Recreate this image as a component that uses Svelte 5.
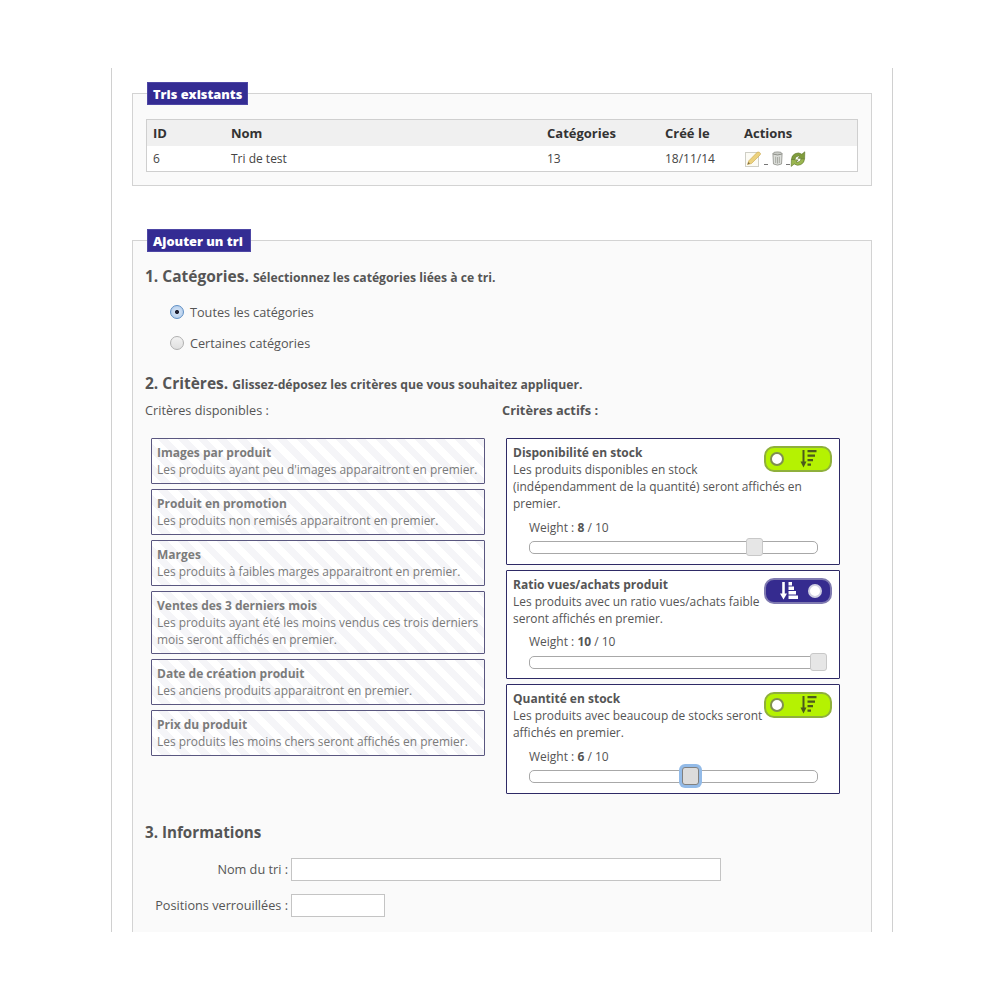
<script>
  const existing = [{ id: 6, name: "Tri de test", cats: 13, date: "18/11/14" }];

  const available = [
    { title: "Images par produit", text: "Les produits ayant peu d'images apparaitront en premier." },
    { title: "Produit en promotion", text: "Les produits non remisés apparaitront en premier." },
    { title: "Marges", text: "Les produits à faibles marges apparaitront en premier." },
    { title: "Ventes des 3 derniers mois", text: "Les produits ayant été les moins vendus ces trois derniers mois seront affichés en premier." },
    { title: "Date de création produit", text: "Les anciens produits apparaitront en premier." },
    { title: "Prix du produit", text: "Les produits les moins chers seront affichés en premier." },
  ];

  const active = [
    { title: "Disponibilité en stock", text: "Les produits disponibles en stock (indépendamment de la quantité) seront affichés en premier.", weight: 8, asc: false },
    { title: "Ratio vues/achats produit", text: "Les produits avec un ratio vues/achats faible seront affichés en premier.", weight: 10, asc: true },
    { title: "Quantité en stock", text: "Les produits avec beaucoup de stocks seront affichés en premier.", weight: 6, asc: false, focus: true },
  ];
</script>

<div class="page">
  <fieldset class="existing">
    <legend>Tris existants</legend>
    <table>
      <thead>
        <tr>
          <th class="c-id">ID</th>
          <th class="c-name">Nom</th>
          <th class="c-cats">Catégories</th>
          <th class="c-date">Créé le</th>
          <th>Actions</th>
        </tr>
      </thead>
      <tbody>
        {#each existing as row}
          <tr>
            <td>{row.id}</td>
            <td>{row.name}</td>
            <td>{row.cats}</td>
            <td>{row.date}</td>
            <td>
              <div class="actions">
                <svg width="17" height="16" viewBox="0 0 17 16">
                  <rect x="0.5" y="1.5" width="13" height="14" fill="#fcfbf4" stroke="#cfcfc6" />
                  <path d="M2.500 13.500 L3.800 9.800 L12.500 1 Q14.500 0.500 15.500 2.500 Q15.500 3.500 15 4 L6.500 12.500 Z" fill="#ecd27e" stroke="#c9a548" stroke-width="0.6" />
                  <path d="M2.500 13.500 L3.400 11 L5 12.500 Z" fill="#7a6a48" />
                </svg>
                <i class="dash"></i>
                <svg class="can" width="11" height="15" viewBox="0 0 12 16">
                  <ellipse cx="6" cy="2.600" rx="5" ry="1.800" fill="#c9cbc6" stroke="#85877f" stroke-width="0.8" />
                  <path d="M1 3 L1.600 14 Q6 16.400 10.400 14 L11 3 Q6 5.600 1 3 Z" fill="#dcdeda" stroke="#85877f" stroke-width="0.8" />
                  <path d="M4 6 V13 M6 6.400 V13.600 M8 6 V13" stroke="#a3a59e" stroke-width="1" />
                </svg>
                <i class="dash short-dash"></i>
                <svg width="16" height="16" viewBox="0 0 16 16">
                  <path d="M1.500 8.500 A6.500 6.500 0 0 1 11.800 3.200 L14.800 0.800 L14.600 7.800 L7.800 7.200 L10 5.400 A3.600 3.600 0 0 0 5 8.500 Z" fill="#7f9c3c" stroke="#5c7426" stroke-width="0.6" />
                  <path d="M14.500 7.800 A6.500 6.500 0 0 1 4.200 13 L1.200 15.400 L1.400 8.400 L8.200 9 L6 10.800 A3.600 3.600 0 0 0 11 7.800 Z" fill="#9ab650" stroke="#5c7426" stroke-width="0.6" />
                </svg>
              </div>
            </td>
          </tr>
        {/each}
      </tbody>
    </table>
  </fieldset>

  <fieldset class="add">
    <legend>Ajouter un tri</legend>

    <h3 class="first">1. Catégories. <small>Sélectionnez les catégories liées à ce tri.</small></h3>
    <div class="radios">
      <label class="radio"><span class="dot on"></span>Toutes les catégories</label>
      <label class="radio"><span class="dot"></span>Certaines catégories</label>
    </div>

    <h3 class="second">2. Critères. <small>Glissez-déposez les critères que vous souhaitez appliquer.</small></h3>
    <div class="columns">
      <div>
        <div class="col-title">Critères disponibles :</div>
        <div class="list">
          {#each available as c}
            <div class="card idle">
              <div class="card-title">{c.title}</div>
              {c.text}
            </div>
          {/each}
        </div>
      </div>
      <div>
        <div class="col-title strong">Critères actifs :</div>
        <div class="list">
          {#each active as c}
            <div class="card">
              <div class="toggle" class:asc={c.asc}>
                {#if c.asc}
                  <svg width="18" height="20" viewBox="0 0 18 20">
                    <path d="M3.500 1 V13" fill="none" stroke="#fff" stroke-width="2.600" />
                    <path d="M0 12.500 H7 L3.500 18.500 Z" fill="#fff" />
                    <path d="M8.500 1h3.500v3.500h-3.500z M8.500 5.500h5.500v3.500h-5.500z M8.500 10h7.500v3.500h-7.500z M8.500 14.500h9.500v3.500h-9.500z" fill="#fff" />
                  </svg>
                  <span class="knob"></span>
                {:else}
                  <span class="knob"></span>
                  <svg width="18" height="20" viewBox="0 0 18 20">
                    <path d="M3.500 1 V13" fill="none" stroke="#4b5a1c" stroke-width="2" />
                    <path d="M0.500 12.500 H6.500 L3.500 18.500 Z" fill="#4b5a1c" />
                    <path d="M7.500 1h9v2.200h-9z M7.500 5.500h7.500v2.200h-7.500z M7.500 10h5.500v2.200h-5.500z M7.500 14.500h3.500v2.200h-3.500z" fill="#4b5a1c" />
                  </svg>
                {/if}
              </div>
              <div class="card-title">{c.title}</div>
              {c.text}
              <div class="weight">Weight : <b>{c.weight}</b> / 10</div>
              <div class="slider">
                <span class="handle" class:focus={c.focus} style="left: {((c.weight - 1) / 9) * 100}%"></span>
              </div>
            </div>
          {/each}
        </div>
      </div>
    </div>

    <h3 class="third">3. Informations</h3>
    <div class="form-row">
      <label for="sort-name">Nom du tri :</label>
      <input id="sort-name" class="long" type="text" />
    </div>
    <div class="form-row">
      <label for="sort-locked">Positions verrouillées :</label>
      <input id="sort-locked" class="short" type="text" />
    </div>
  </fieldset>
</div>

<style>
  :global(body) {
    margin: 0;
    background: #fff;
    font-family: "Open Sans", sans-serif;
    font-size: 12px;
    color: #555;
  }

  .page {
    box-sizing: border-box;
    width: 782px;
    height: 864px;
    margin: 68px 0 0 111px;
    padding: 14px 20px 0;
    border-left: 1px solid #d0d0d0;
    border-right: 1px solid #d0d0d0;
    overflow: hidden;
  }

  fieldset {
    margin: 0;
    padding: 0 13px;
    border: 1px solid #d3d3d3;
    background: #fafafa;
    min-width: 0;
  }

  legend {
    margin-left: 1px;
    padding: 0 5px;
    height: 23px;
    line-height: 23px;
    box-sizing: border-box;
    background: #342c93;
    border: 1px solid #4d46a5;
    color: #fff;
    font-size: 12.8px;
    font-weight: 800;
  }

  .existing {
    height: 104px;
    box-sizing: border-box;
    margin-bottom: 43px;
  }

  .add {
    padding: 0 12px 30px;
  }

  .add legend {
    margin-left: 2px;
    padding-right: 7px;
  }

  table {
    width: 712px;
    margin-top: 14px;
    border-collapse: collapse;
    table-layout: fixed;
    border: 1px solid #cfcfcf;
    background: #fff;
    color: #444;
  }

  th {
    height: 26px;
    padding: 0 0 0 6px;
    background: #f0f0f0;
    text-align: left;
    font-size: 13px;
    font-weight: 700;
    color: #333;
  }

  td {
    height: 25px;
    padding: 0 0 0 6px;
  }

  .c-id { width: 72px; }
  .c-name { width: 310px; }
  .c-cats { width: 112px; }
  .c-date { width: 73px; }

  .actions {
    display: flex;
    align-items: center;
    margin-left: 1px;
  }

  .dash {
    width: 4px;
    height: 1px;
    margin: 11px 4px 0 2px;
    background: #777;
  }

  .dash.short-dash {
    margin: 11px 0 0 3px;
  }

  h3 {
    margin: 0;
    font-size: 15.5px;
    font-weight: 700;
    color: #555;
  }

  h3 small {
    font-size: 12.2px;
  }

  .first { margin-top: 13px; line-height: 22px; }

  .radios {
    display: flex;
    flex-direction: column;
    gap: 13px;
    margin: 14px 0 0 24px;
  }

  .radio {
    display: flex;
    align-items: center;
    height: 18px;
    font-size: 12.7px;
  }

  .dot {
    box-sizing: border-box;
    width: 14px;
    height: 14px;
    margin: 0 6px 0 1px;
    border: 1px solid #b0b0b0;
    border-radius: 50%;
    background: linear-gradient(#f2f2f2, #e0e0e0);
  }

  .dot.on {
    border-color: #5f8fc4;
    background: radial-gradient(circle, #223 0 1.6px, #cfe0f4 2.4px, #a9c6e8 100%);
  }

  .second { margin-top: 20px; line-height: 22px; }

  .columns {
    display: grid;
    grid-template-columns: 357px 1fr;
    margin-top: 5px;
  }

  .col-title {
    height: 18px;
    line-height: 18px;
    font-size: 12.7px;
  }

  .col-title.strong {
    font-size: 12.8px;
    font-weight: 700;
  }

  .list {
    display: flex;
    flex-direction: column;
    gap: 5px;
    margin: 19px 0 0 6px;
    width: 334px;
  }

  .columns > div + div .list {
    margin-left: 4px;
  }

  .card {
    box-sizing: border-box;
    padding: 5px 6px 9.6px;
    border: 1px solid #2e2a66;
    border-radius: 1px;
    background: #fff;
    font-size: 11.93px;
    line-height: 17px;
    color: #555;
  }

  .card.idle {
    padding: 5px 0 5px 5px;
    border-color: #5a5780;
    color: #7b7b7b;
    background: repeating-linear-gradient(45deg, #fff 0 7px, #f5f5f8 7px 14px);
  }

  .card-title {
    font-size: 12px;
    font-weight: 700;
  }

  .toggle {
    float: right;
    box-sizing: border-box;
    display: flex;
    align-items: center;
    justify-content: space-between;
    width: 68px;
    height: 26px;
    margin: 2px 1px 0 0;
    padding: 0 12px 0 4px;
    border: 2px solid #8fb03c;
    border-radius: 10px;
    background: #b5f202;
  }

  .toggle.asc {
    padding: 0 8px 0 14px;
    border-color: #7f7ab0;
    background: #352b8f;
  }

  .knob {
    box-sizing: border-box;
    width: 14px;
    height: 14px;
    border-radius: 50%;
    background: #fff;
    border: 2px solid #7f8f50;
  }

  .asc .knob {
    border-color: #d0d0e2;
  }

  .weight {
    margin: 6.5px 0 0 16px;
    font-size: 12px;
  }

  .slider {
    position: relative;
    box-sizing: border-box;
    width: 289px;
    height: 13px;
    margin: 5.5px 0 0 16px;
    border: 1px solid #a8a8a8;
    border-radius: 5px;
    background: #fff;
  }

  .handle {
    position: absolute;
    top: -4px;
    box-sizing: border-box;
    width: 17px;
    height: 18px;
    margin-left: -7px;
    border: 1px solid #c8c8c8;
    border-radius: 3px;
    background: #e6e6e6;
  }

  .handle.focus {
    border: 1px solid #808080;
    background: #dcdcdc;
    box-shadow: 0 0 0 3px #93bbe8;
  }

  .third {
    margin: 27px 0 15px;
    font-size: 15.2px;
    line-height: 22px;
  }

  .form-row {
    display: flex;
    align-items: center;
    margin-bottom: 13px;
  }

  .form-row label {
    width: 143px;
    margin-right: 3px;
    text-align: right;
    font-size: 12.7px;
  }

  input {
    box-sizing: border-box;
    height: 23px;
    padding: 0;
    border: 1px solid #c4c4c4;
    background: #fff;
  }

  .long { width: 430px; }
  .short { width: 94px; }
</style>
